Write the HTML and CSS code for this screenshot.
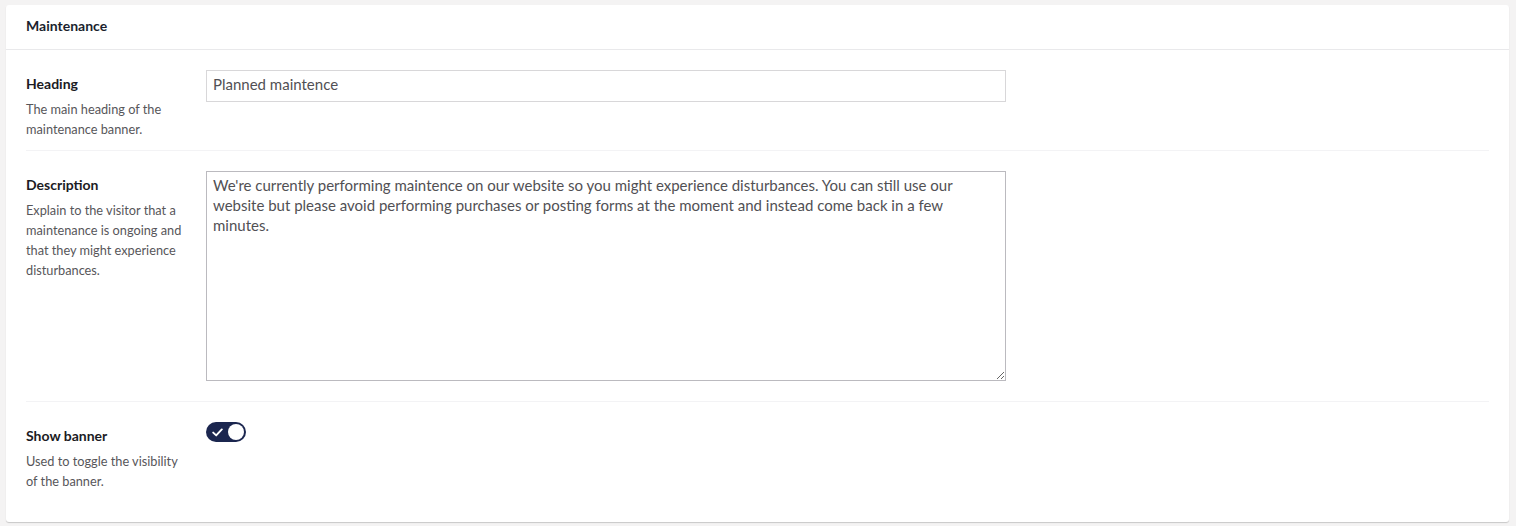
FILE: index.html
```html
<!DOCTYPE html>
<html lang="en">
<head>
<meta charset="utf-8">
<title>Maintenance</title>
<link rel="stylesheet" href="styles.css">
</head>
<body>
<div class="box">
  <div class="box-header">
    <div class="box-title">Maintenance</div>
  </div>
  <div class="box-content">
    <div class="prop">
      <div class="prop-label">
        <div class="label">Heading</div>
        <div class="desc">The main heading of the maintenance banner.</div>
      </div>
      <div class="prop-editor">
        <input class="text-input" type="text" value="Planned maintence">
      </div>
    </div>
    <div class="prop">
      <div class="prop-label">
        <div class="label">Description</div>
        <div class="desc">Explain to the visitor that a maintenance is ongoing and that they might experience disturbances.</div>
      </div>
      <div class="prop-editor">
        <textarea class="text-area">We're currently performing maintence on our website so you might experience disturbances. You can still use our website but please avoid performing purchases or posting forms at the moment and instead come back in a few minutes.</textarea>
      </div>
    </div>
    <div class="prop">
      <div class="prop-label">
        <div class="label">Show banner</div>
        <div class="desc">Used to toggle the visibility of the banner.</div>
      </div>
      <div class="prop-editor">
        <div class="toggle">
          <svg class="toggle-check" width="11" height="9" viewBox="0 0 11 9"><path d="M1.2 4.6 L4.2 7.4 L9.8 1.4" fill="none" stroke="#fff" stroke-width="1.9" stroke-linecap="round" stroke-linejoin="round"/></svg>
          <span class="toggle-knob"></span>
        </div>
      </div>
    </div>
  </div>
</div>
</body>
</html>
```

FILE: styles.css
```css
* { box-sizing: border-box; }
html, body { margin: 0; padding: 0; }
body {
  background: #f4f3f3;
  font-family: Lato, "Open Sans", sans-serif;
  color: #1b264f;
  height: 526px;
  overflow: hidden;
}
.box {
  margin: 5px 7px 0 6px;
  background: #fff;
  border-radius: 3px;
  box-shadow: 0 1px 1px rgba(0, 0, 0, 0.18);
}
.box-header {
  height: 45px;
  padding: 0 20px 3px;
  border-bottom: 1px solid #e9e9eb;
  display: flex;
  align-items: center;
}
.box-title {
  font-size: 14px;
  font-weight: 700;
  color: #1b1f2e;
}
.box-content {
  padding: 20px 20px 20px 20px;
}
.prop {
  display: flex;
  align-items: flex-start;
  padding: 20px 0 11px;
  border-bottom: 1px solid #f3f3f5;
}
.prop:first-child { padding-top: 0; }
.prop:last-child { border-bottom: none; }
.prop-label {
  width: 180px;
  flex: none;
  padding: 4px 20px 0 0;
}
.label {
  font-size: 14px;
  line-height: 20px;
  font-weight: 700;
  color: #1b1b24;
}
.desc {
  margin-top: 5px;
  font-size: 12.75px;
  line-height: 20px;
  color: #57565a;
}
.prop-editor {
  padding-bottom: 9px;
}
.text-input {
  display: block;
  width: 800px;
  height: 32px;
  margin: 0;
  padding: 1px 6px 5px;
  border: 1px solid #d8d7d9;
  border-radius: 0;
  font-family: Lato, "Open Sans", sans-serif;
  font-size: 15px;
  color: #515054;
  outline: none;
}
.text-area {
  display: block;
  width: 800px;
  height: 210px;
  margin: 0;
  padding: 3px 6px;
  border: 1px solid #bbbabf;
  border-radius: 0;
  font-family: Lato, "Open Sans", sans-serif;
  font-size: 15px;
  line-height: 20px;
  color: #515054;
  outline: none;
}
.toggle {
  position: relative;
  width: 40px;
  height: 20px;
  border-radius: 10px;
  background: #1b264f;
  display: flex;
  align-items: center;
}
.toggle-check {
  margin-left: 6px;
}
.toggle-knob {
  position: absolute;
  right: 2px;
  top: 2px;
  width: 16px;
  height: 16px;
  border-radius: 50%;
  background: #fff;
}
```
